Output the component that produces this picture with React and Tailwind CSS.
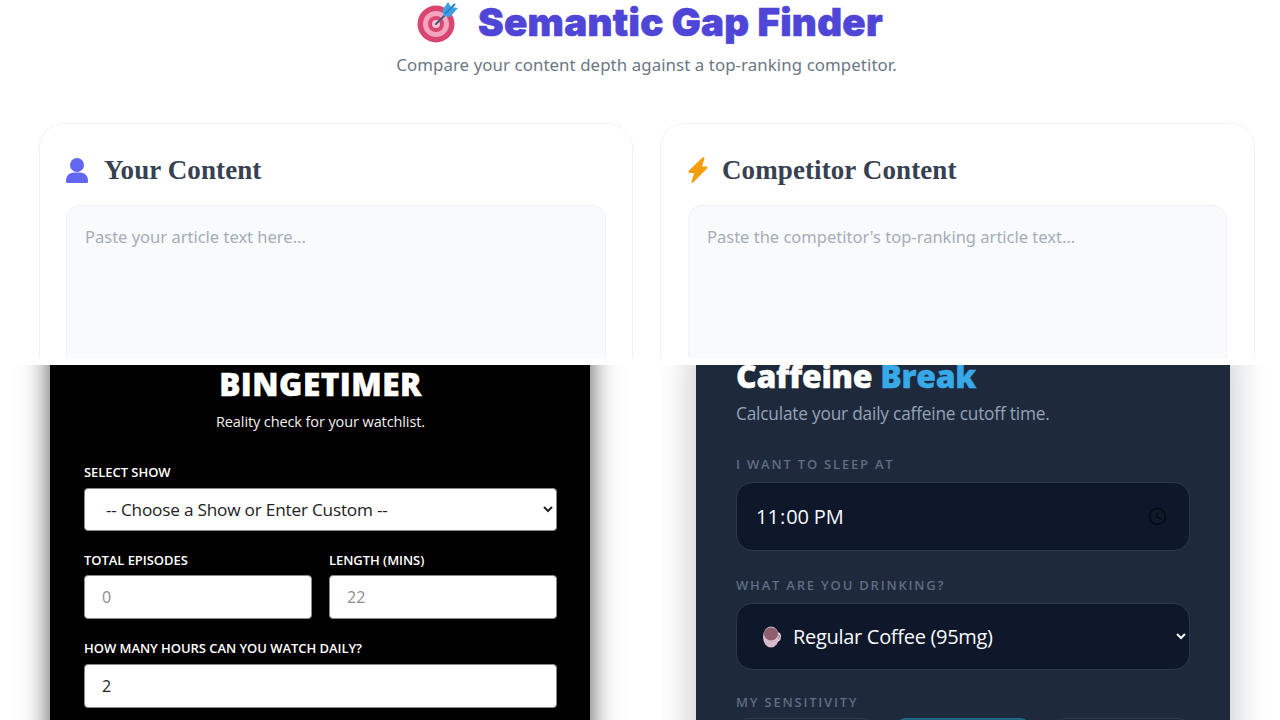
function TargetIcon() {
  return (
    <svg width="42" height="42" viewBox="0 0 42 42" className="shrink-0">
      <circle cx="19" cy="23" r="18.500" fill="#d9466f" />
      <circle cx="19" cy="23" r="13" fill="#f4a6c0" />
      <circle cx="19" cy="23" r="8" fill="#d9466f" />
      <circle cx="19" cy="23" r="4" fill="#f4c2d2" />
      <path d="M19 23L31 11" stroke="#40617a" strokeWidth="2" strokeLinecap="round" />
      <path d="M25 10l6-9 3 5 7 1-8 9-6-1z" fill="#3f9fe0" />
      <path d="M28 13l10-10" stroke="#2b84cc" strokeWidth="2" />
    </svg>
  )
}

function UserIcon() {
  return (
    <svg width="22" height="25" viewBox="0 0 22 25" fill="#6366f1" className="shrink-0">
      <circle cx="11" cy="7" r="7" />
      <path d="M1 25c-1 0-1-1-1-2 0-5 3-8.500 8-8.500h6c5 0 8 3.500 8 8.500 0 1 0 2-1 2z" />
    </svg>
  )
}

function BoltIcon() {
  return (
    <svg width="20" height="26" viewBox="0 0 20 26" fill="#f59e0b" className="shrink-0">
      <path d="M14.500 0.500L1 13.500c-1 1-.6 2.500.6 2.500H6L3.500 25c0 1 1 1.200 1.500.6L19 11.500c.8-.8.400-2-.6-2H14L16.500 1.500c.2-1-1.200-1.700-2-1z" />
    </svg>
  )
}

function ContentCard({ icon, title, placeholder, gap, pad }) {
  return (
    <div className={`h-[300px] rounded-t-[24px] border border-[#f0f3f6] pt-[26px] ${pad}`}>
      <h2 className={`flex h-[40px] items-center text-[27px] font-bold tracking-[0.1px] text-[#374151] font-['Liberation_Serif',serif] ${gap}`}>
        {icon}
        {title}
      </h2>
      <textarea
        className="mt-[15px] h-[200px] w-full resize-none rounded-t-[14px] border border-[#eef2f6] bg-[#f8fafc] px-[18px] py-[19px] text-[16.500px] font-['Noto_Sans',sans-serif] placeholder:text-[#a6adb8]"
        placeholder={placeholder}
      />
    </div>
  )
}

function BingeLabel({ children }) {
  return (
    <label className="mb-[6px] block text-[13px] leading-[18px] font-semibold tracking-[-0.05px] text-white">
      {children}
    </label>
  )
}

const bingeInput = "h-[44px] w-full rounded-[4px] border border-[#8a8a8a] bg-white px-[17px] text-[16px] text-[#222] placeholder:text-[#8d8d8d]"

function BingeCard() {
  return (
    <div className="-mt-[30px] h-[420px] w-[540px] bg-black pt-[30px] pr-[33px] pl-[34px] font-['Open_Sans',sans-serif] shadow-[0_0_26px_rgba(0,0,0,0.68)]">
      <h1 className="pt-[2px] text-center text-[31.500px] leading-[34px] font-extrabold tracking-[0.5px] text-white [-webkit-text-stroke:0.5px_#ffffff]">BINGETIMER</h1>
      <p className="mt-[11px] text-center text-[14.500px] leading-[20px] tracking-[-0.1px] text-[#f1f1f1]">Reality check for your watchlist.</p>
      <div className="mt-[31px]">
        <BingeLabel>SELECT SHOW</BingeLabel>
        <select className="mt-[1px] h-[43px] w-full rounded-[4px] border border-[#8a8a8a] bg-white px-[17px] text-[17.200px] tracking-[-0.2px] text-[#222]">
          <option>-- Choose a Show or Enter Custom --</option>
        </select>
      </div>
      <div className="mt-[20px] grid grid-cols-2 gap-[17px]">
        <div>
          <BingeLabel>TOTAL EPISODES</BingeLabel>
          <input className={bingeInput} placeholder="0" />
        </div>
        <div>
          <BingeLabel>LENGTH (MINS)</BingeLabel>
          <input className={bingeInput} placeholder="22" />
        </div>
      </div>
      <div className="mt-[20px]">
        <BingeLabel>HOW MANY HOURS CAN YOU WATCH DAILY?</BingeLabel>
        <input className={`mt-[1px] ${bingeInput}`} defaultValue="2" />
      </div>
    </div>
  )
}

function CaffeineLabel({ children }) {
  return (
    <label className="block text-[13px] leading-[18px] font-semibold tracking-[1.800px] text-[#5f6d82]">
      {children}
    </label>
  )
}

function CaffeineCard() {
  return (
    <div className="-mt-[30px] h-[420px] w-[534px] bg-[#1e293b] px-[40px] pt-[30px] font-['Open_Sans',sans-serif] shadow-[0_8px_36px_rgba(15,23,42,0.28)]">
      <h1 className="-mt-[7px] text-[32px] leading-[36px] font-extrabold tracking-[-0.3px] text-white [-webkit-text-stroke:0.4px_currentColor]">
        Caffeine <span className="text-[#38a9e8]">Break</span>
      </h1>
      <p className="mt-[8px] text-[17.300px] leading-[24px] tracking-[-0.2px] text-[#94a3b8]">Calculate your daily caffeine cutoff time.</p>
      <div className="mt-[29px]">
        <CaffeineLabel>I WANT TO SLEEP AT</CaffeineLabel>
        <input
          type="time"
          defaultValue="23:00"
          className="mt-[9px] h-[69px] w-full rounded-[16px] border border-[#2c394d] bg-[#0f172a] px-[18px] text-[20px] text-[#f8fafc] [&::-webkit-calendar-picker-indicator]:opacity-50"
        />
      </div>
      <div className="mt-[25px]">
        <CaffeineLabel>WHAT ARE YOU DRINKING?</CaffeineLabel>
        <div className="relative mt-[9px]">
          <svg width="20" height="24" viewBox="0 0 20 24" className="absolute top-[22px] left-[26px]">
            <ellipse cx="9" cy="12" rx="8" ry="10.500" fill="#d9bccb" />
            <ellipse cx="9" cy="9" rx="7" ry="6.500" fill="#8f5f6f" />
            <path d="M16 8c3 1 3 6 0 8" fill="none" stroke="#e8d8e0" strokeWidth="1.500" />
          </svg>
          <select className="h-[67px] w-full rounded-[16px] border border-[#2c394d] bg-[#0f172a] pr-[8px] pl-[52px] text-[20px] tracking-[-0.3px] text-[#f8fafc]">
            <option>Regular Coffee (95mg)</option>
          </select>
        </div>
      </div>
      <div className="mt-[23px]">
        <CaffeineLabel>MY SENSITIVITY</CaffeineLabel>
        <div className="mt-[7px] grid grid-cols-3 gap-[20px]">
          <button className="h-[44px] rounded-[12px] border border-[#2c394d] bg-[#1e293b]" />
          <button className="h-[44px] rounded-[12px] border border-[#1f6f8f] bg-[#22607e]" />
          <button className="h-[44px] rounded-[12px] border border-[#2c394d] bg-[#1e293b]" />
        </div>
      </div>
    </div>
  )
}

export default function App() {
  return (
    <div className="flex h-[720px] w-[1280px] flex-col overflow-hidden bg-white">
      <div className="relative z-10 h-[365px] shrink-0 bg-white">
        <div className="h-[358px] overflow-hidden">
          <div className="flex h-[44px] items-center justify-center gap-[19px] pl-[20px]">
            <TargetIcon />
            <h1 className="text-[38.500px] leading-[44px] font-black tracking-[0.3px] text-[#4f46d8] font-['Inter',sans-serif] [-webkit-text-stroke:0.6px_#4f46d8]">Semantic Gap Finder</h1>
          </div>
          <p className="mt-[8px] pl-[13px] text-center text-[16.800px] leading-[26px] tracking-[0.1px] text-[#6b7785] font-['Noto_Sans',sans-serif]">
            Compare your content depth against a top-ranking competitor.
          </p>
          <div className="mt-[45px] ml-[39px] grid w-[1216px] grid-cols-[594px_595px] gap-[27px]">
            <ContentCard icon={<UserIcon />} title="Your Content" placeholder="Paste your article text here..." gap="gap-[16px]" pad="px-[26px]" />
            <ContentCard icon={<BoltIcon />} title="Competitor Content" placeholder="Paste the competitor's top-ranking article text..." gap="gap-[14px]" pad="px-[27px]" />
          </div>
        </div>
      </div>
      <div className="flex flex-1 gap-[106px] overflow-hidden bg-white pl-[50px]">
        <BingeCard />
        <CaffeineCard />
      </div>
    </div>
  )
}
